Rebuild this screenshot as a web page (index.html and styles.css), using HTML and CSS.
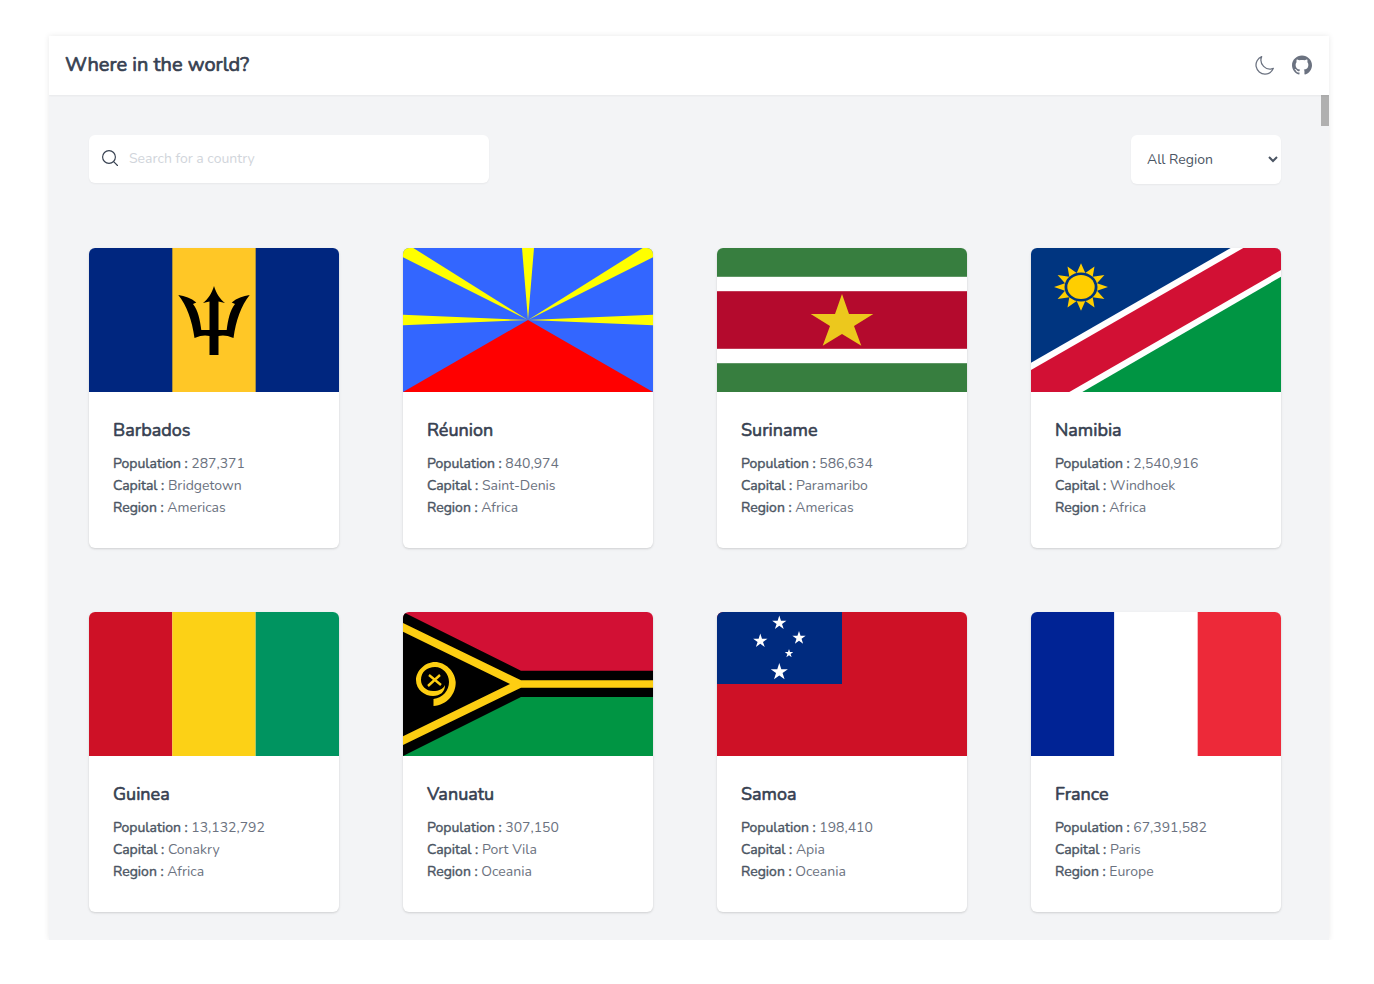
FILE: index.html
```html
<!DOCTYPE html>
<html lang="en">
<head>
<meta charset="utf-8">
<title>Where in the world?</title>
<link rel="stylesheet" href="styles.css">
</head>
<body>
<div class="window">
  <header class="topbar">
    <h1 class="brand">Where in the world?</h1>
    <div class="actions">
      <svg class="moon" viewBox="0 0 24 24" fill="none" stroke="currentColor" stroke-width="1.25" stroke-linecap="round" stroke-linejoin="round"><path d="M20.354 15.354A9 9 0 018.646 3.646 9.003 9.003 0 0012 21a9.003 9.003 0 008.354-5.646z"/></svg>
      <svg class="github" viewBox="0 0 24 24" fill="currentColor"><path d="M12 .5C5.37.5 0 5.78 0 12.292c0 5.211 3.438 9.63 8.205 11.188.6.111.82-.254.82-.567 0-.28-.01-1.022-.015-2.005-3.338.711-4.042-1.582-4.042-1.582-.546-1.361-1.335-1.725-1.335-1.725-1.087-.731.084-.716.084-.716 1.205.082 1.838 1.215 1.838 1.215 1.07 1.803 2.809 1.282 3.495.981.108-.763.417-1.282.76-1.577-2.665-.295-5.466-1.309-5.466-5.827 0-1.287.465-2.339 1.235-3.164-.135-.298-.54-1.497.105-3.121 0 0 1.005-.316 3.3.968.96-.262 1.98-.392 3-.398 1.02.006 2.04.136 3 .398 2.28-1.284 3.285-.968 3.285-.968.645 1.624.24 2.823.12 3.121.765.825 1.23 1.877 1.23 3.164 0 4.53-2.805 5.527-5.475 5.817.42.354.81 1.077.81 2.182 0 1.578-.015 2.846-.015 3.229 0 .309.21.678.825.56C20.565 21.917 24 17.495 24 12.292 24 5.78 18.63.5 12 .5z"/></svg>
    </div>
  </header>
  <main class="content">
    <div class="scroll-thumb"></div>
    <div class="filters">
      <label class="search">
        <svg class="search-icon" viewBox="0 0 16 16" fill="none" stroke="currentColor" stroke-width="1.15" stroke-linecap="round"><circle cx="7" cy="7" r="6.4"/><path d="M11.6 11.6l3.9 3.9"/></svg>
        <input class="search-input" type="text" placeholder="Search for a country">
      </label>
      <select class="region">
        <option>All Region</option>
      </select>
    </div>
    <div class="grid">
      <article class="card">
        <svg class="flag" viewBox="0 0 250 144" preserveAspectRatio="none">
          <rect width="250" height="144" fill="#00267f"/>
          <rect x="83.33" width="83.33" height="144" fill="#ffc726"/>
          <path d="M125 38C127 45 131 51 136 55L129.5 53.5V82H137.7C139 72 141 62 146 56L142.7 54.5C148 50 154 48 160.7 47C152 58 147 72 144.5 90C138 87 133 87 129.5 88V107H120.5V88C117 87 112 87 105.5 90C103 72 98 58 89.3 47C96 48 102 50 107.3 54.5L104 56C109 62 111 72 112.3 82H120.5V53.5L114 55C119 51 123 45 125 38Z"/>
        </svg>
        <div class="info">
          <h2 class="name">Barbados</h2>
          <p class="row"><b>Population :</b> 287,371</p>
          <p class="row"><b>Capital :</b> Bridgetown</p>
          <p class="row"><b>Region :</b> Americas</p>
        </div>
      </article>
      <article class="card">
        <svg class="flag" viewBox="0 0 250 144" preserveAspectRatio="none">
          <rect width="250" height="144" fill="#3366ff"/>
          <polygon points="125,72 119,0 131,0" fill="#ffff00"/>
          <polygon points="125,72 0,9.3 0,0 10.3,0" fill="#ffff00"/>
          <polygon points="125,72 250,9.3 250,0 239.7,0" fill="#ffff00"/>
          <polygon points="125,72 0,66.7 0,77.3" fill="#ffff00"/>
          <polygon points="125,72 250,66.7 250,77.3" fill="#ffff00"/>
          <polygon points="0,144 125,72 250,144" fill="#ff0000"/>
        </svg>
        <div class="info">
          <h2 class="name">Réunion</h2>
          <p class="row"><b>Population :</b> 840,974</p>
          <p class="row"><b>Capital :</b> Saint-Denis</p>
          <p class="row"><b>Region :</b> Africa</p>
        </div>
      </article>
      <article class="card">
        <svg class="flag" viewBox="0 0 250 144" preserveAspectRatio="none">
          <rect width="250" height="144" fill="#377e3f"/>
          <rect y="28.8" width="250" height="86.4" fill="#ffffff"/>
          <rect y="43.2" width="250" height="57.6" fill="#b40a2d"/>
          <polygon points="125,46 132,66 156.3,66 137,78 144.3,97.7 125,86 105.7,97.7 113,78 93.7,66 118,66" fill="#ecc81d"/>
        </svg>
        <div class="info">
          <h2 class="name">Suriname</h2>
          <p class="row"><b>Population :</b> 586,634</p>
          <p class="row"><b>Capital :</b> Paramaribo</p>
          <p class="row"><b>Region :</b> Americas</p>
        </div>
      </article>
      <article class="card">
        <svg class="flag" viewBox="0 0 250 144" preserveAspectRatio="none">
          <rect width="250" height="144" fill="#003580"/>
          <polygon points="0,114.7 199.7,0 250,0 250,144 0,144" fill="#ffffff"/>
          <polygon points="0,122 212.3,0 250,0 250,22 38.3,144 0,144" fill="#d21034"/>
          <polygon points="250,28.7 250,144 51.3,144" fill="#009543"/>
          <g transform="translate(50 39) scale(1 .88)">
            <polygon points="0,-27 4.3,-16 13.5,-23.4 11.7,-11.7 23.4,-13.5 16,-4.3 27,0 16,4.3 23.4,13.5 11.7,11.7 13.5,23.4 4.3,16 0,27 -4.3,16 -13.5,23.4 -11.7,11.7 -23.4,13.5 -16,4.3 -27,0 -16,-4.3 -23.4,-13.5 -11.7,-11.7 -13.5,-23.4 -4.3,-16" fill="#ffce00"/>
            <circle r="16.5" fill="#003580"/>
            <circle r="13.7" fill="#ffce00"/>
          </g>
        </svg>
        <div class="info">
          <h2 class="name">Namibia</h2>
          <p class="row"><b>Population :</b> 2,540,916</p>
          <p class="row"><b>Capital :</b> Windhoek</p>
          <p class="row"><b>Region :</b> Africa</p>
        </div>
      </article>
      <article class="card">
        <svg class="flag" viewBox="0 0 250 144" preserveAspectRatio="none">
          <rect width="83.33" height="144" fill="#ce1126"/>
          <rect x="83.33" width="83.34" height="144" fill="#fcd116"/>
          <rect x="166.67" width="83.33" height="144" fill="#009460"/>
        </svg>
        <div class="info">
          <h2 class="name">Guinea</h2>
          <p class="row"><b>Population :</b> 13,132,792</p>
          <p class="row"><b>Capital :</b> Conakry</p>
          <p class="row"><b>Region :</b> Africa</p>
        </div>
      </article>
      <article class="card">
        <svg class="flag" viewBox="0 0 250 144" preserveAspectRatio="none">
          <rect width="250" height="72" fill="#d21034"/>
          <rect y="72" width="250" height="72" fill="#009543"/>
          <polygon points="0,0 118,58.7 250,58.7 250,85 118,85 0,144"/>
          <polygon points="0,11 118,68.3 250,68.3 250,75.7 118,75.7 0,133 0,124.3 107,72 0,19.7" fill="#fdce12"/>
          <path d="M30.5 94C44 93 53 82 52.7 70C52 59 42 50 32 50C22 50 13 59 13 68C13 78 22 84 30 84C37 84 42 80 42 73C40 77 36 79 30 79C23 79 18 74 18 68C18 60 24 55 32 55C40 55 46 62 46 70C46 78 40 86 30.5 87Z" fill="#fdce12"/>
          <path d="M25 74L37 63M26 63L38 73" stroke="#fdce12" stroke-width="2.4" fill="none"/>
        </svg>
        <div class="info">
          <h2 class="name">Vanuatu</h2>
          <p class="row"><b>Population :</b> 307,150</p>
          <p class="row"><b>Capital :</b> Port Vila</p>
          <p class="row"><b>Region :</b> Oceania</p>
        </div>
      </article>
      <article class="card">
        <svg class="flag" viewBox="0 0 250 144" preserveAspectRatio="none">
          <rect width="250" height="144" fill="#ce1126"/>
          <rect width="125" height="72" fill="#002b7f"/>
          <g fill="#ffffff">
            <polygon transform="translate(62.3 11) scale(7.5)" points="0,-1 .225,-.309 .951,-.309 .363,.118 .588,.809 0,.382 -.588,.809 -.363,.118 -.951,-.309 -.225,-.309"/>
            <polygon transform="translate(82 26) scale(7)" points="0,-1 .225,-.309 .951,-.309 .363,.118 .588,.809 0,.382 -.588,.809 -.363,.118 -.951,-.309 -.225,-.309"/>
            <polygon transform="translate(43.3 29) scale(7.5)" points="0,-1 .225,-.309 .951,-.309 .363,.118 .588,.809 0,.382 -.588,.809 -.363,.118 -.951,-.309 -.225,-.309"/>
            <polygon transform="translate(72 41.5) scale(4.5)" points="0,-1 .225,-.309 .951,-.309 .363,.118 .588,.809 0,.382 -.588,.809 -.363,.118 -.951,-.309 -.225,-.309"/>
            <polygon transform="translate(62.3 60) scale(9)" points="0,-1 .225,-.309 .951,-.309 .363,.118 .588,.809 0,.382 -.588,.809 -.363,.118 -.951,-.309 -.225,-.309"/>
          </g>
        </svg>
        <div class="info">
          <h2 class="name">Samoa</h2>
          <p class="row"><b>Population :</b> 198,410</p>
          <p class="row"><b>Capital :</b> Apia</p>
          <p class="row"><b>Region :</b> Oceania</p>
        </div>
      </article>
      <article class="card">
        <svg class="flag" viewBox="0 0 250 144" preserveAspectRatio="none">
          <rect width="83.33" height="144" fill="#002395"/>
          <rect x="83.33" width="83.34" height="144" fill="#ffffff"/>
          <rect x="166.67" width="83.33" height="144" fill="#ed2939"/>
        </svg>
        <div class="info">
          <h2 class="name">France</h2>
          <p class="row"><b>Population :</b> 67,391,582</p>
          <p class="row"><b>Capital :</b> Paris</p>
          <p class="row"><b>Region :</b> Europe</p>
        </div>
      </article>
    </div>
  </main>
</div>
</body>
</html>
```
FILE: styles.css
```css
* { box-sizing: border-box; }
html, body { margin: 0; padding: 0; background: #ffffff; }
body {
  padding: 36px 45px 44px 49px;
  font-family: "Nunito", "Lato", "Noto Sans", sans-serif;
  color: #374151;
}
.window {
  width: 1280px;
  height: 904px;
  display: flex;
  flex-direction: column;
  box-shadow: 0 0 6px rgba(0, 0, 0, 0.09);
  clip-path: inset(-10px -10px 0 -10px);
  overflow: hidden;
}
.topbar {
  height: 59px;
  flex: none;
  display: flex;
  align-items: center;
  justify-content: space-between;
  padding: 0 16px 2px;
  background: #ffffff;
  box-shadow: 0 1px 2px rgba(0, 0, 0, 0.05);
  position: relative;
  z-index: 1;
}
.brand {
  margin: 0;
  font-size: 20px;
  font-weight: 400;
  -webkit-text-stroke: 0.7px #374151;
  line-height: 28px;
  color: #374151;
}
.actions {
  display: flex;
  align-items: center;
  gap: 15px;
  color: #6b7280;
}
.moon { width: 24px; height: 24px; display: block; }
.github { width: 20px; height: 20px; display: block; margin-right: 1px; }
.content {
  position: relative;
  flex: 1;
  overflow: hidden;
  background: #f3f4f6;
  padding: 40px 48px 0 40px;
}
.scroll-thumb {
  position: absolute;
  top: 0;
  right: 0;
  width: 8px;
  height: 31px;
  background: #b0b0b0;
}
.filters {
  display: flex;
  align-items: flex-start;
  justify-content: space-between;
  margin-bottom: 64px;
}
.search {
  width: 400px;
  height: 48px;
  display: flex;
  align-items: center;
  gap: 11px;
  padding: 0 12px 2px 13px;
  background: #ffffff;
  border-radius: 6px;
  box-shadow: 0 1px 2px rgba(0, 0, 0, 0.05);
  color: #374151;
}
.search-icon { width: 16px; height: 16px; flex: none; }
.search-input {
  flex: 1;
  border: 0;
  outline: 0;
  padding: 0;
  font: inherit;
  font-size: 14px;
  background: transparent;
  color: #374151;
}
.search-input::placeholder { color: #d1d5db; opacity: 1; }
.region {
  width: 150px;
  height: 49px;
  border: 0;
  outline: 0;
  padding: 0 0 0 12px;
  background: #ffffff;
  border-radius: 6px;
  box-shadow: 0 1px 2px rgba(0, 0, 0, 0.05);
  font: inherit;
  font-size: 14px;
  color: #4b5563;
}
.grid {
  display: grid;
  grid-template-columns: repeat(4, 250px);
  justify-content: space-between;
  row-gap: 64px;
}
.card {
  height: 300px;
  background: #ffffff;
  border-radius: 6px;
  overflow: hidden;
  box-shadow: 0 1px 3px rgba(0, 0, 0, 0.1), 0 1px 2px rgba(0, 0, 0, 0.06);
}
.flag { display: block; width: 250px; height: 144px; }
.info { padding: 24px 24px 0; }
.name {
  margin: 0 0 9px;
  font-size: 18px;
  font-weight: 400;
  -webkit-text-stroke: 0.6px #374151;
  line-height: 28px;
  color: #374151;
}
.row {
  margin: 0;
  font-size: 14px;
  line-height: 22px;
  color: #6b7280;
}
.row b { font-weight: 400; -webkit-text-stroke: 0.4px #4b5563; color: #4b5563; }
```
